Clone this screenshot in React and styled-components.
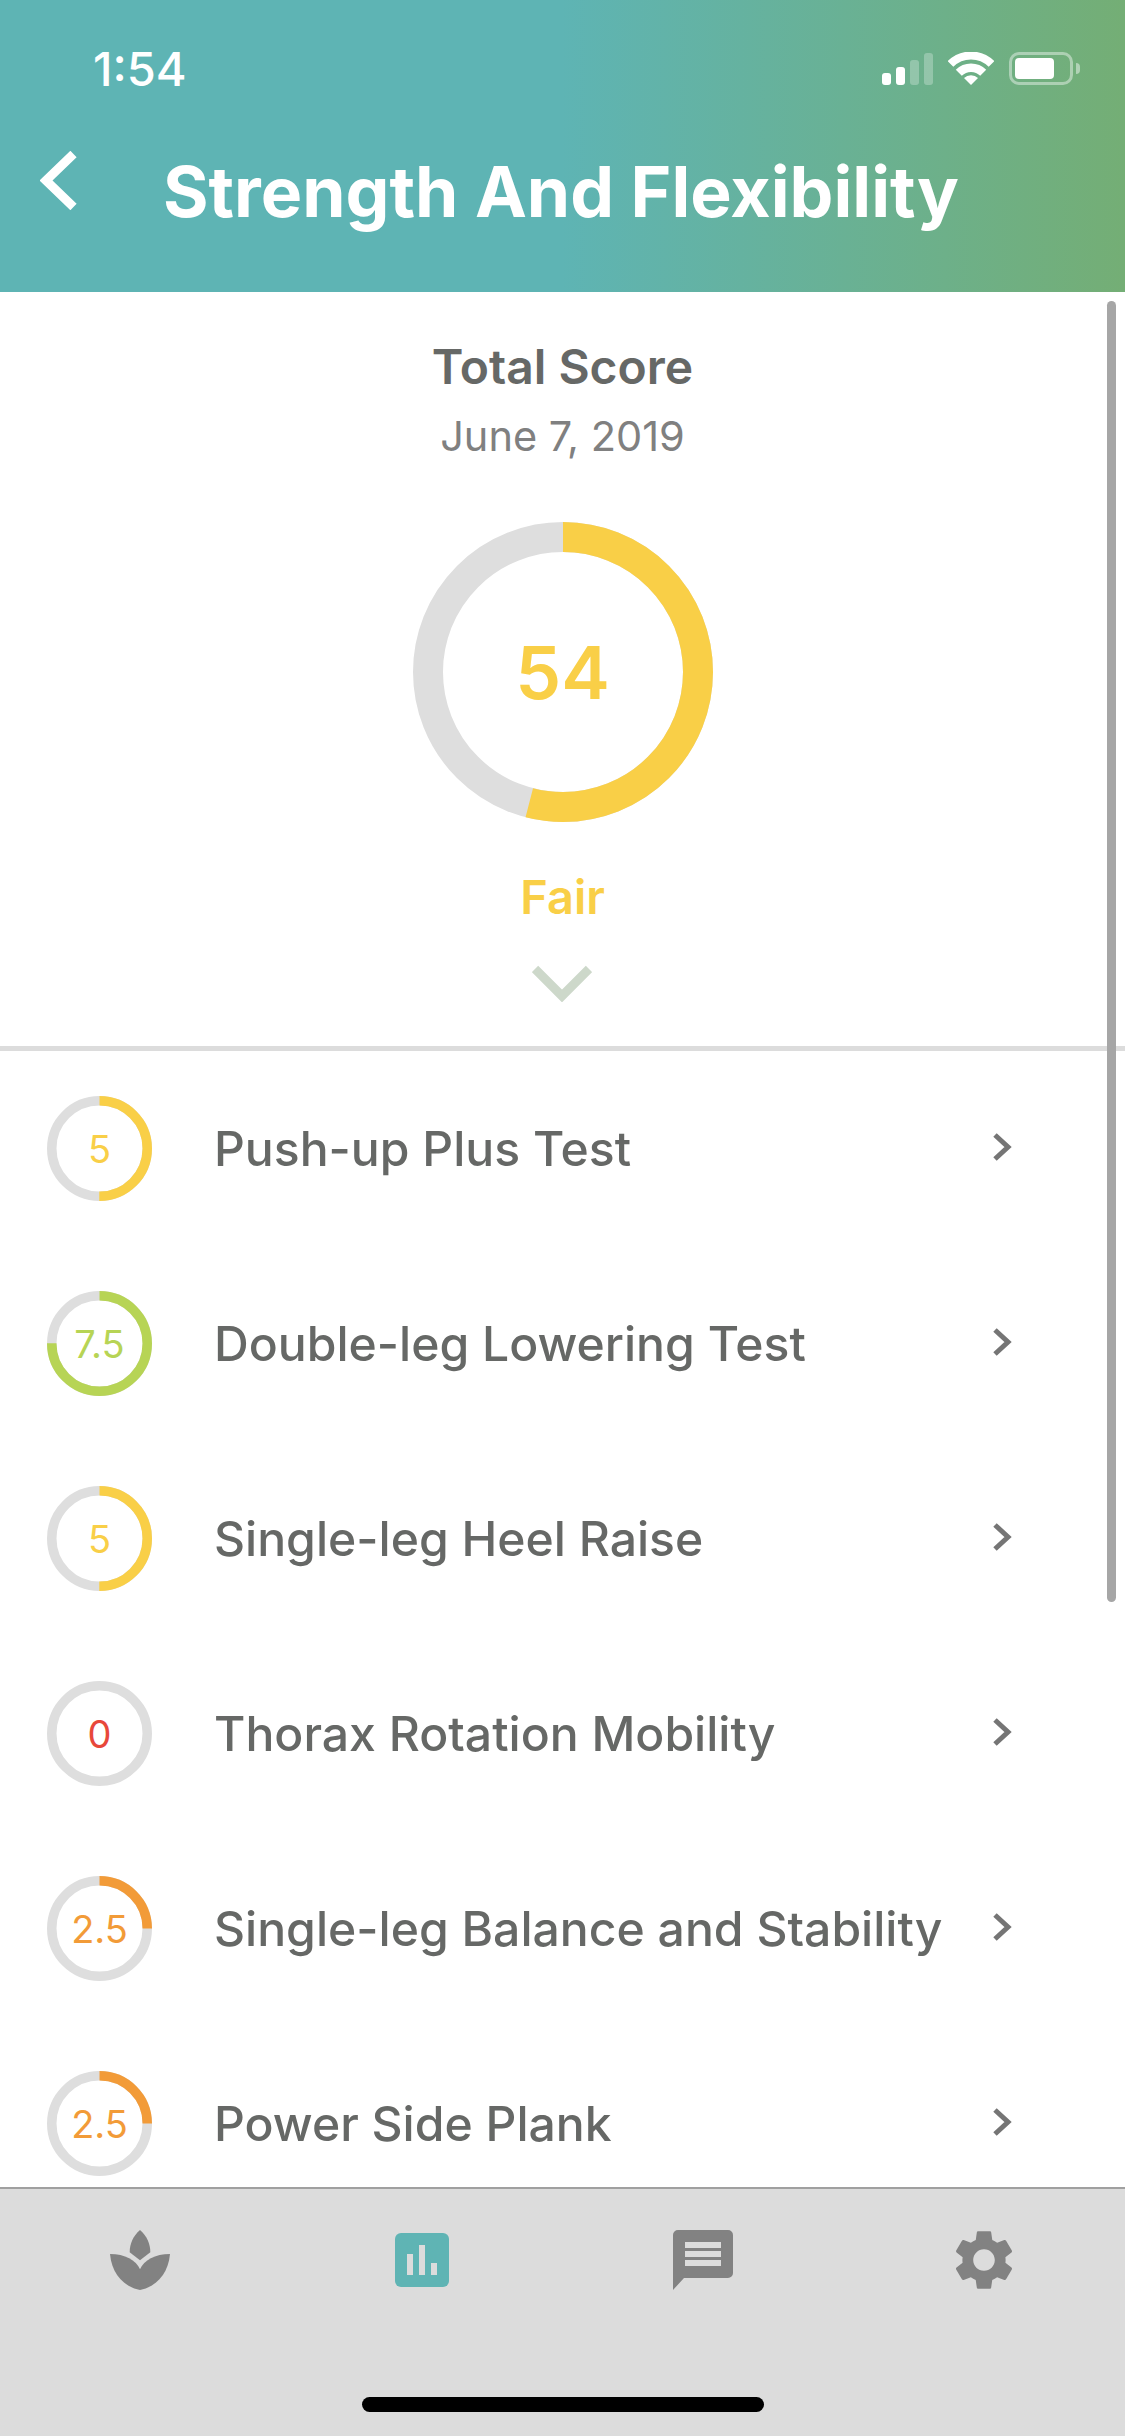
import React from "react";
import styled, { createGlobalStyle } from "styled-components";

const Global = createGlobalStyle`
  html, body { margin: 0; padding: 0; background: #fff; }
  body { font-family: Inter, "Liberation Sans", sans-serif; }
`;

const Page = styled.div`
  width: 1125px;
  height: 2436px;
  display: flex;
  flex-direction: column;
  overflow: hidden;
  background: #fff;
`;

const Header = styled.header`
  height: 292px;
  flex: none;
  box-sizing: border-box;
  background: linear-gradient(90deg, #5eb4b4 0%, #5eb4b4 50%, #74ae75 100%);
  color: #fff;
  padding-top: 52px;
`;

const StatusBar = styled.div`
  height: 33px;
  display: flex;
  align-items: center;
  justify-content: space-between;
  padding: 0 52px 0 93px;
`;

const Clock = styled.span`
  font-size: 47px;
  font-weight: 500;
  line-height: 33px;
`;

const StatusIcons = styled.div`
  display: flex;
  align-items: flex-end;
  gap: 15px;
`;

const Signal = styled.div`
  display: flex;
  align-items: flex-end;
  gap: 5px;
  height: 33px;
`;

const SignalBar = styled.span`
  width: 9px;
  height: ${(p) => p.$h}px;
  border-radius: 3px;
  background: #fff;
  opacity: ${(p) => (p.$dim ? 0.27 : 1)};
`;

const Battery = styled.div`
  width: 64px;
  height: 33px;
  box-sizing: border-box;
  border: 3px solid rgba(255, 255, 255, 0.42);
  border-radius: 10px;
  padding: 3px;
  position: relative;
  &::after {
    content: "";
    position: absolute;
    right: -10px;
    top: 8px;
    width: 4px;
    height: 11px;
    border-radius: 0 4px 4px 0;
    background: rgba(255, 255, 255, 0.45);
  }
`;

const BatteryFill = styled.div`
  width: 39px;
  height: 100%;
  border-radius: 4px;
  background: #fff;
`;

const TitleRow = styled.div`
  display: flex;
  align-items: center;
  margin-top: 72px;
  height: 70px;
  padding-left: 40px;
`;

const BackIcon = styled.svg`
  width: 37px;
  height: 59px;
  flex: none;
  margin-top: -24px;
`;

const Title = styled.h1`
  margin: 0 0 0 86px;
  font-size: 69.6px;
  font-weight: 700;
  line-height: 70px;
  white-space: nowrap;
`;

const Content = styled.main`
  flex: 1;
  min-height: 0;
  position: relative;
  overflow: hidden;
`;

const ScrollThumb = styled.div`
  position: absolute;
  right: 9px;
  top: 9px;
  width: 9px;
  height: 1301px;
  border-radius: 5px;
  background: #a6a6a6;
`;

const Hero = styled.section`
  display: flex;
  flex-direction: column;
  align-items: center;
  padding: 47px 0 44px;
  border-bottom: 5px solid #dcdcdc;
`;

const HeroTitle = styled.h2`
  margin: 0;
  font-size: 48px;
  font-weight: 600;
  line-height: 56px;
  color: #666866;
`;

const HeroDate = styled.div`
  margin-top: 16px;
  font-size: 41.5px;
  line-height: 50px;
  color: #808080;
`;

const RingBox = styled.div`
  display: grid;
  place-items: center;
  width: ${(p) => p.$size}px;
  height: ${(p) => p.$size}px;
  flex: none;
  & > * { grid-area: 1 / 1; }
`;

const HeroRing = styled(RingBox)`
  margin-top: 61px;
`;

const RingSvg = styled.svg`
  display: block;
  transform: rotate(-90deg);
`;

const HeroScore = styled.span`
  font-size: 73px;
  font-weight: 600;
  color: #f9cf47;
`;

const Verdict = styled.div`
  margin-top: 47px;
  font-size: 47px;
  font-weight: 600;
  line-height: 56px;
  color: #f9cf47;
`;

const ExpandIcon = styled.svg`
  display: block;
  margin: 40px 2px 0 0;
  width: 60px;
  height: 37px;
`;

const List = styled.ul`
  margin: 0;
  padding: 0;
  list-style: none;
`;

const Row = styled.li`
  height: 195px;
  display: flex;
  align-items: center;
  padding-left: 47px;
`;

const RowScore = styled.span`
  font-size: 38px;
  font-weight: 400;
  color: ${(p) => p.$color};
`;

const RowLabel = styled.span`
  flex: 1;
  margin-left: 62px;
  font-size: 48.1px;
  font-weight: 550;
  color: #666866;
  white-space: nowrap;
`;

const RowChevron = styled.svg`
  flex: none;
  width: 20px;
  height: 28px;
  margin: -3px 112px 0 0;
`;

const TabBar = styled.nav`
  height: 249px;
  flex: none;
  box-sizing: border-box;
  border-top: 2px solid #a0a0a0;
  background: #dcdcdc;
  padding-top: 41px;
  display: flex;
  flex-direction: column;
  align-items: center;
`;

const Tabs = styled.div`
  width: 100%;
  display: grid;
  grid-template-columns: repeat(4, 1fr);
  height: 60px;
  place-items: center;
`;

const TabIcon = styled.svg`
  display: block;
  width: ${(p) => p.$w || 60}px;
  height: ${(p) => p.$w || 60}px;
`;

const LotusIcon = styled(TabIcon)`
  margin-right: 2px;
`;

const HomeIndicator = styled.div`
  width: 402px;
  height: 15px;
  margin-top: 107px;
  border-radius: 8px;
  background: #000;
`;

const GRAY = "#dedede";

function Ring({ size, stroke, value, color }) {
  const r = (size - stroke) / 2;
  const c = 2 * Math.PI * r;
  return (
    <RingSvg width={size} height={size} viewBox={`0 0 ${size} ${size}`}>
      <circle cx={size / 2} cy={size / 2} r={r} fill="none" stroke={GRAY} strokeWidth={stroke} />
      {value > 0 && (
        <circle
          cx={size / 2}
          cy={size / 2}
          r={r}
          fill="none"
          stroke={color}
          strokeWidth={stroke}
          strokeDasharray={`${(c * value) / 100} ${c}`}
        />
      )}
    </RingSvg>
  );
}

const YELLOW = "#f9cf47";
const GREEN = "#b7d455";
const ORANGE = "#f29b38";
const RED = "#e8483a";

const items = [
  { score: "5", value: 50, color: YELLOW, label: "Push-up Plus Test" },
  { score: "7.5", value: 75, color: GREEN, label: "Double-leg Lowering Test" },
  { score: "5", value: 50, color: YELLOW, label: "Single-leg Heel Raise" },
  { score: "0", value: 0, color: RED, label: "Thorax Rotation Mobility" },
  { score: "2.5", value: 25, color: ORANGE, label: "Single-leg Balance and Stability" },
  { score: "2.5", value: 25, color: ORANGE, label: "Power Side Plank" },
];

export default function App() {
  return (
    <Page>
      <Global />
      <Header>
        <StatusBar>
          <Clock>1:54</Clock>
          <StatusIcons>
            <Signal>
              <SignalBar $h={12} />
              <SignalBar $h={18} />
              <SignalBar $h={25} $dim />
              <SignalBar $h={32} $dim />
            </Signal>
            <svg width="46" height="33" viewBox="0 0 46 33" fill="none" stroke="#fff">
              <path d="M2.5 12 A29 29 0 0 1 43.5 12" strokeWidth="8" />
              <path d="M10.8 20.8 A17.25 17.25 0 0 1 35.2 20.8" strokeWidth="8.5" />
              <path d="M16 26 L23 33 L30 26 A10 10 0 0 0 16 26Z" fill="#fff" stroke="none" />
            </svg>
            <Battery>
              <BatteryFill />
            </Battery>
          </StatusIcons>
        </StatusBar>
        <TitleRow>
          <BackIcon viewBox="0 0 37 59" fill="none" stroke="#fff" strokeWidth="9" strokeLinejoin="miter">
            <path d="M33.5 3 L6 29.5 L33.5 56" />
          </BackIcon>
          <Title>Strength And Flexibility</Title>
        </TitleRow>
      </Header>

      <Content>
        <Hero>
          <HeroTitle>Total Score</HeroTitle>
          <HeroDate>June 7, 2019</HeroDate>
          <HeroRing $size={300}>
            <Ring size={300} stroke={30} value={54} color={YELLOW} />
            <HeroScore>54</HeroScore>
          </HeroRing>
          <Verdict>Fair</Verdict>
          <ExpandIcon viewBox="0 0 60 37" fill="none" stroke="#cdd8ca" strokeWidth="9">
            <path d="M3 4 L30 31 L57 4" />
          </ExpandIcon>
        </Hero>
        <List>
          {items.map((it) => (
            <Row key={it.label}>
              <RingBox $size={105}>
                <Ring size={105} stroke={9.5} value={it.value} color={it.color} />
                <RowScore $color={it.color}>{it.score}</RowScore>
              </RingBox>
              <RowLabel>{it.label}</RowLabel>
              <RowChevron viewBox="0 0 20 28" fill="none" stroke="#757575" strokeWidth="5">
                <path d="M2 2 L15 14 L2 26" />
              </RowChevron>
            </Row>
          ))}
        </List>
        <ScrollThumb />
      </Content>

      <TabBar>
        <Tabs>
          <LotusIcon viewBox="0 0 180 180" fill="#828282">
            <path d="M90 0 C110 18 121 40 121 67 L90 91 L59 67 C59 40 70 18 90 0Z" />
            <path d="M0 72 C45 72 78 90 90 118 L90 180 C40 170 5 130 0 72Z" />
            <path d="M180 72 C135 72 102 90 90 118 L90 180 C140 170 175 130 180 72Z" />
          </LotusIcon>
          <TabIcon $w={54} viewBox="0 0 54 54">
            <rect width="54" height="54" rx="6" fill="#5fb4b4" />
            <g fill="#dcdcdc">
              <rect x="12" y="21" width="6" height="21" />
              <rect x="24" y="12" width="6" height="30" />
              <rect x="36" y="30" width="6" height="12" />
            </g>
          </TabIcon>
          <TabIcon viewBox="0 0 60 60">
            <path
              fill="#828282"
              fillRule="evenodd"
              d="M5 0 H55 a5 5 0 0 1 5 5 V43 a5 5 0 0 1 -5 5 H11 L0 60 V5 a5 5 0 0 1 5 -5Z M12 12 V18 H48 V12Z M12 21 V27 H48 V21Z M12 30 V36 H48 V30Z"
            />
          </TabIcon>
          <TabIcon viewBox="2 2 20 20">
            <path
              fill="#828282"
              d="M19.14 12.94c.04-.3.06-.61.06-.94 0-.32-.02-.64-.07-.94l2.03-1.58c.18-.14.23-.41.12-.61l-1.92-3.32c-.12-.22-.37-.29-.59-.22l-2.39.96c-.5-.38-1.03-.7-1.62-.94l-.36-2.54c-.04-.24-.24-.41-.48-.41h-3.84c-.24 0-.43.17-.47.41l-.36 2.54c-.59.24-1.13.57-1.62.94l-2.39-.96c-.22-.08-.47 0-.59.22L2.74 8.87c-.12.21-.08.47.12.61l2.03 1.58c-.05.3-.09.63-.09.94s.02.64.07.94l-2.03 1.58c-.18.14-.23.41-.12.61l1.92 3.32c.12.22.37.29.59.22l2.39-.96c.5.38 1.03.7 1.62.94l.36 2.54c.05.24.24.41.48.41h3.84c.24 0 .44-.17.47-.41l.36-2.54c.59-.24 1.13-.56 1.62-.94l2.39.96c.22.08.47 0 .59-.22l1.92-3.32c.12-.22.07-.47-.12-.61l-2.01-1.58zM12 15.6c-1.98 0-3.6-1.62-3.6-3.6s1.62-3.6 3.6-3.6 3.6 1.62 3.6 3.6-1.62 3.6-3.6 3.6z"
            />
          </TabIcon>
        </Tabs>
        <HomeIndicator />
      </TabBar>
    </Page>
  );
}
